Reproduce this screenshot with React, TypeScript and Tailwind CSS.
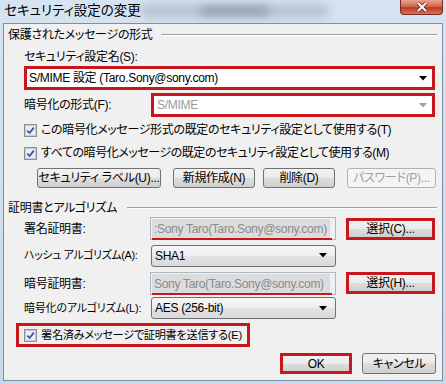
import React from "react";

const FONT = "font-['Liberation_Sans','Noto_Sans_CJK_JP',sans-serif] [font-feature-settings:'palt'] tracking-[-0.3px] whitespace-nowrap";

function Check() {
  return (
    <span className="w-[13px] h-[13px] border border-[#8f8f8f] bg-[linear-gradient(135deg,#dcdcdc,#ffffff)] flex items-center justify-center shrink-0">
      <svg width="11" height="11" viewBox="0 0 11 11">
        <rect x="0.5" y="0.5" width="10" height="10" fill="#e8eef8" stroke="#c0cbe0" strokeWidth="1" />
        <path d="M2.3 5.6 L4.6 8 L8.8 2.6" fill="none" stroke="#3f55a0" strokeWidth="1.8" />
      </svg>
    </span>
  );
}

function Arrow({ gray }: { gray?: boolean }) {
  return (
    <svg width="8" height="5" viewBox="0 0 8 5" className="shrink-0">
      <path d="M0 0 H8 L4 4.5 Z" fill={gray ? "#a0a0a0" : "#000"} />
    </svg>
  );
}

function Btn({ children, className = "", disabled }: { children: React.ReactNode; className?: string; disabled?: boolean }) {
  return (
    <div
      className={
        "flex items-center justify-center rounded-[3px] border text-[12px] " +
        (disabled
          ? "border-[#adb2b5] bg-[#f4f4f4] text-[#a0a0a0] "
          : "border-[#707070] bg-[linear-gradient(#f2f2f2_0%,#ebebeb_50%,#dddddd_50%,#cfcfcf_100%)] text-black ") +
        className
      }
    >
      {children}
    </div>
  );
}

function GroupHeader({ text, lineStart }: { text: string; lineStart: string }) {
  return (
    <div className="flex items-center h-[16px] mt-[3px]">
      <span className="ml-[4px] text-[12px] leading-[16px]">{text}</span>
      <div className={"h-[2px] border-t border-[#a0a0a0] border-b-white border-b flex-1 mr-[5px] " + lineStart}></div>
    </div>
  );
}

function CertField({ text, colon }: { text: string; colon?: boolean }) {
  return (
    <div className="w-[186px] h-[23px] border border-[#abb7c3] bg-[#eef0f2] flex items-center">
      <div className="relative ml-[1px] w-[178px] h-[19px] bg-[#dcdcdc] flex items-center">
        <span className="ml-[2px] text-[12px] text-[#8a8a8a]">
          {colon ? ":" : ""}
          {text}
        </span>
        <div className="absolute left-0 right-[-2px] bottom-[-2px] h-[2px] bg-[#c8161d]"></div>
      </div>
    </div>
  );
}

function Combo({ text, className = "" }: { text: string; className?: string }) {
  return (
    <div
      className={
        "h-[22px] rounded-[3px] border border-[#707070] bg-[linear-gradient(#f6f6f6_0%,#ededed_50%,#e3e3e3_50%,#dadada_100%)] flex items-center justify-between pl-[3px] pr-[8px] text-[12px] " +
        className
      }
    >
      <span>{text}</span>
      <Arrow />
    </div>
  );
}

export default function App() {
  return (
    <div className={"relative w-[446px] h-[384px] overflow-hidden text-black bg-[linear-gradient(180deg,#d6e3f0,#c9d8e8)] " + FONT}>
      {/* blurred background behind aero title */}
      <div className="absolute left-[140px] top-[4px] w-[190px] h-[14px] rounded-full bg-[#aab6c4] blur-[5px] opacity-70"></div>
      <div className="absolute left-[200px] top-[6px] w-[70px] h-[10px] rounded-full bg-[#7f8c9b] blur-[4px] opacity-60"></div>

      {/* title */}
      <div className="relative h-[23px] flex items-center pl-[4px]">
        <span className="text-[13.5px] leading-[18px] mt-[-2px] tracking-normal text-black">セキュリティ設定の変更</span>
      </div>

      {/* close button */}
      <div className="absolute left-[400px] top-0 w-[43px] h-[15px] rounded-b-[4px] border border-t-0 border-[#7a2b23] bg-[linear-gradient(#e7a28f_0%,#d0684f_45%,#c0391f_55%,#d2705a_100%)] flex items-center justify-center">
        <svg width="12" height="10" viewBox="0 0 12 10">
          <path d="M2 1 L10 9 M10 1 L2 9" stroke="#5a1d16" strokeWidth="3.4" />
          <path d="M2 1 L10 9 M10 1 L2 9" stroke="#ffffff" strokeWidth="2" />
        </svg>
      </div>

      {/* body */}
      <div className="relative ml-[3px] mr-[3px] h-[358px] border border-[#7d8fa1] bg-[#f0f0f0] flex flex-col">
        <GroupHeader text="保護されたメッセージの形式" lineStart="ml-[8px]" />

        <div className="mt-[6px] h-[16px] ml-[20px] text-[12px] leading-[16px]">セキュリティ設定名(S):</div>

        <div className="mt-[1px] ml-[20px] w-[411px] h-[24px] border-[3px] border-[#c8161d] bg-white flex items-center justify-between pl-[2px] pr-[5px] text-[12px]">
          <span>S/MIME 設定 (Taro.Sony@sony.com)</span>
          <Arrow />
        </div>

        <div className="mt-[3px] h-[24px] flex items-center">
          <span className="ml-[20px] w-[127px] text-[12px]">暗号化の形式(F):</span>
          <div className="w-[284px] h-[24px] border-[3px] border-[#c8161d] bg-white flex items-center justify-between pl-[3px] pr-[5px] text-[12px] text-[#9a9a9a]">
            <span>S/MIME</span>
            <Arrow gray />
          </div>
        </div>

        <div className="mt-[5px] h-[16px] ml-[20px] flex items-center gap-[4px] text-[12px]">
          <Check />
          <span className="tracking-[-0.35px]">この暗号化メッセージ形式の既定のセキュリティ設定として使用する(T)</span>
        </div>

        <div className="mt-[7px] h-[16px] ml-[20px] flex items-center gap-[4px] text-[12px]">
          <Check />
          <span className="tracking-[-0.45px]">すべての暗号化メッセージの既定のセキュリティ設定として使用する(M)</span>
        </div>

        <div className="mt-[7px] h-[20px] flex">
          <Btn className="ml-[33px] w-[124px]">セキュリティ ラベル(U)...</Btn>
          <Btn className="ml-[12px] w-[82px]">新規作成(N)</Btn>
          <Btn className="ml-[8px] w-[72px]">削除(D)</Btn>
          <Btn className="ml-[12px] w-[89px]" disabled>
            パスワード(P)...
          </Btn>
        </div>

        <div className="mt-[9px]">
          <GroupHeader text="証明書とアルゴリズム" lineStart="ml-[10px]" />
        </div>

        <div className="mt-[1px] h-[23px] flex items-center">
          <span className="ml-[20px] w-[126px] text-[12px]">署名証明書:</span>
          <CertField text="Sony Taro(Taro.Sony@sony.com)" colon />
          <div className="ml-[10px] w-[89px] h-[22px] border-[3px] border-[#c8161d] flex">
            <Btn className="flex-1 rounded-none border-0">選択(C)...</Btn>
          </div>
        </div>

        <div className="mt-[4px] h-[23px] flex items-center">
          <span className="ml-[20px] w-[127px] text-[11px] tracking-[-0.4px]">ハッシュ アルゴリズム(A):</span>
          <Combo text="SHA1" className="w-[185px]" />
        </div>

        <div className="mt-[5px] h-[23px] flex items-center">
          <span className="ml-[20px] w-[126px] text-[12px]">暗号証明書:</span>
          <CertField text="Sony Taro(Taro.Sony@sony.com)" />
          <div className="ml-[10px] w-[89px] h-[22px] border-[3px] border-[#c8161d] flex self-start">
            <Btn className="flex-1 rounded-none border-0">選択(H)...</Btn>
          </div>
        </div>

        <div className="mt-[2px] h-[22px] flex items-center">
          <span className="ml-[20px] w-[127px] text-[11px] tracking-[-0.2px]">暗号化のアルゴリズム(L):</span>
          <Combo text="AES (256-bit)" className="w-[185px]" />
        </div>

        <div className="mt-[4px] ml-[12px] w-[234px] h-[24px] border-[3px] border-[#c8161d] flex items-center gap-[4px] pl-[5px]">
          <Check />
          <span className="text-[11.2px] tracking-[-0.3px]">署名済みメッセージで証明書を送信する(E)</span>
        </div>

        <div className="mt-[6px] h-[21px] flex">
          <div className="ml-[276px] w-[72px] h-[21px] border-[3px] border-[#c8161d] flex">
            <Btn className="flex-1 rounded-none border-0">OK</Btn>
          </div>
          <Btn className="ml-[10px] w-[74px] h-[21px]">キャンセル</Btn>
        </div>
      </div>
    </div>
  );
}
